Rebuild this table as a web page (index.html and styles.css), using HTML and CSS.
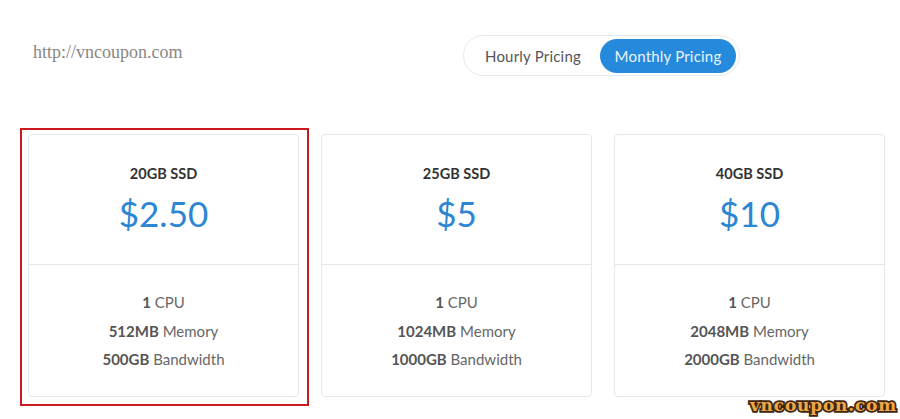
FILE: index.html
```html
<!DOCTYPE html>
<html>
<head>
<meta charset="utf-8">
<link rel="stylesheet" href="styles.css">
</head>
<body>
<div class="page">
  <header class="header">
    <div class="site-url">http://vncoupon.com</div>
    <div class="toggle">
      <button class="toggle-btn">Hourly Pricing</button>
      <button class="toggle-btn active">Monthly Pricing</button>
    </div>
  </header>
  <section class="plans">
    <div class="card highlighted">
      <div class="card-top">
        <div class="plan-name">20GB SSD</div>
        <div class="plan-price">$2.50</div>
      </div>
      <ul class="features">
        <li><b>1</b> CPU</li>
        <li><b>512MB</b> Memory</li>
        <li><b>500GB</b> Bandwidth</li>
      </ul>
    </div>
    <div class="card">
      <div class="card-top">
        <div class="plan-name">25GB SSD</div>
        <div class="plan-price">$5</div>
      </div>
      <ul class="features">
        <li><b>1</b> CPU</li>
        <li><b>1024MB</b> Memory</li>
        <li><b>1000GB</b> Bandwidth</li>
      </ul>
    </div>
    <div class="card">
      <div class="card-top">
        <div class="plan-name">40GB SSD</div>
        <div class="plan-price">$10</div>
      </div>
      <ul class="features">
        <li><b>1</b> CPU</li>
        <li><b>2048MB</b> Memory</li>
        <li><b>2000GB</b> Bandwidth</li>
      </ul>
    </div>
  </section>
  <div class="watermark">vncoupon.com</div>
</div>
</body>
</html>
```
FILE: styles.css
```css
html, body {
  margin: 0;
  padding: 0;
  background: #ffffff;
}
.page {
  position: relative;
  width: 900px;
  height: 419px;
  overflow: hidden;
  font-family: Lato, "Open Sans", sans-serif;
}
.header {
  display: flex;
  align-items: center;
  padding: 35px 160px 0 33px;
  height: 41px;
}
.site-url {
  font-family: "Liberation Serif", "DejaVu Serif", serif;
  font-size: 18px;
  color: #8a8683;
  margin-top: -6px;
}
.toggle {
  margin-left: auto;
  display: flex;
  align-items: center;
  box-sizing: border-box;
  width: 277px;
  height: 41px;
  padding: 0 3px 0 4px;
  border: 1px solid #e6e9ec;
  border-radius: 21px;
  background: #fff;
}
.toggle-btn {
  font-family: Lato, "Open Sans", sans-serif;
  font-size: 15px;
  border: none;
  background: transparent;
  color: #555;
  height: 34px;
  border-radius: 17px;
  padding: 0 17px;
  letter-spacing: 0.2px;
  cursor: pointer;
}
.toggle-btn.active {
  margin-left: auto;
  width: 136px;
  padding: 0;
  background: #2589dc;
  color: #e9f5ff;
}
.plans {
  display: grid;
  grid-template-columns: repeat(3, 271px);
  column-gap: 22px;
  padding: 0 0 0 28px;
  margin-top: 58px;
}
.card {
  position: relative;
  border: 1px solid #e5e7ea;
  border-radius: 4px;
  height: 263px;
  box-sizing: border-box;
  background: #fff;
}
.card.highlighted::after {
  content: "";
  position: absolute;
  top: -7px;
  left: -9px;
  right: -11px;
  bottom: -10px;
  border: 2px solid #c91a1f;
}
.card-top {
  height: 130px;
  border-bottom: 1px solid #e5e7ea;
  display: flex;
  flex-direction: column;
  align-items: center;
  padding-top: 30px;
  box-sizing: border-box;
}
.plan-name {
  font-size: 14.5px;
  font-weight: 700;
  color: #333;
  line-height: 18px;
}
.plan-price {
  margin-top: 10px;
  font-size: 35px;
  line-height: 40px;
  color: #2c86d2;
}
.features {
  list-style: none;
  margin: 0;
  padding: 23px 0 0;
  text-align: center;
  font-size: 15px;
  line-height: 29px;
  color: #666;
}
.features li:nth-child(n+2) {
  margin-top: -0.5px;
}
.features b {
  color: #555;
  font-weight: 700;
}
.watermark {
  position: absolute;
  right: 3px;
  bottom: 5px;
  font-family: "DejaVu Serif", serif;
  font-weight: 900;
  font-size: 17px;
  letter-spacing: 0.8px;
  color: #f3a646;
  -webkit-text-stroke: 3.5px #3e260c;
  paint-order: stroke fill;
  line-height: 18px;
}
```
